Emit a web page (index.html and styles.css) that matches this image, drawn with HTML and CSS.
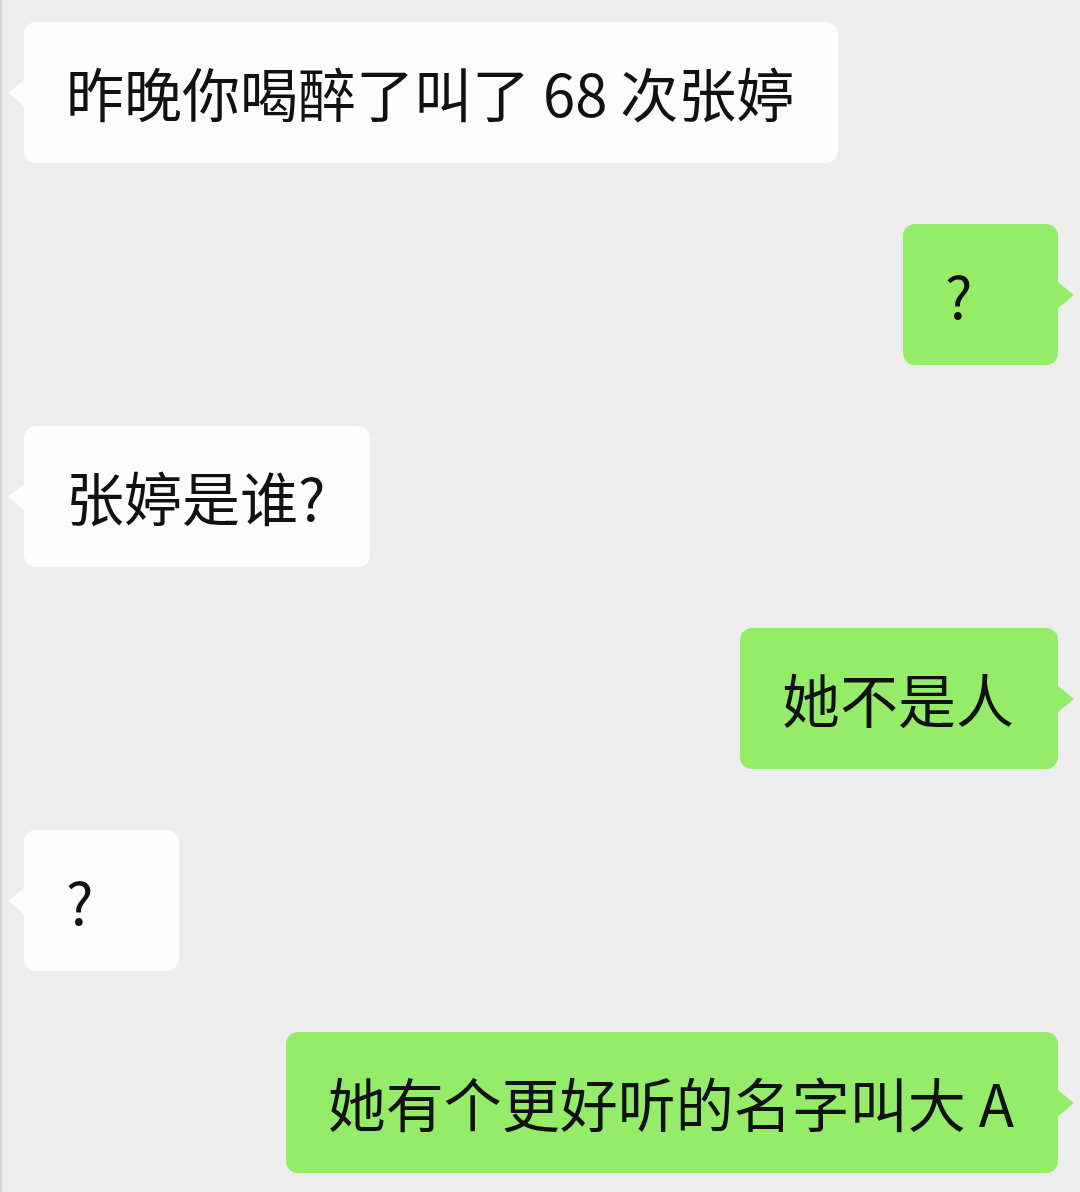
FILE: index.html
```html
<!DOCTYPE html>
<html lang="zh-CN">
<head>
    <meta charset="UTF-8">
    <meta name="viewport" content="width=device-width, initial-scale=1.0">
    <title>聊天记录</title>
    <link rel="stylesheet" href="styles.css">
</head>
<body>

    <!-- Chatverlauf -->
    <div class="chat">
        <div class="row left">
            <div class="bubble">昨晚你喝醉了叫了 68 次张婷</div>
        </div>
        <div class="row right">
            <div class="bubble">?</div>
        </div>
        <div class="row left">
            <div class="bubble">张婷是谁?</div>
        </div>
        <div class="row right">
            <div class="bubble">她不是人</div>
        </div>
        <div class="row left">
            <div class="bubble">?</div>
        </div>
        <div class="row right">
            <div class="bubble">她有个更好听的名字叫大 A</div>
        </div>
    </div>

</body>
</html>
```

FILE: styles.css
```css
/* Grauer Hintergrund wie im Chatfenster */
body {
    margin: 0;
    background-color: #ededed;
    font-family: "Noto Sans CJK SC", "Noto Sans", sans-serif;
    color: #111;
}

.chat {
    display: flex;
    flex-direction: column;
    gap: 61px;
    padding: 22px 0 17px 0;
    border-left: 2px solid #d6d6d6;
    min-height: 1192px;
    box-sizing: border-box;
}

.row {
    display: flex;
}

.row.left {
    justify-content: flex-start;
    padding-left: 22px;
}

.row.right {
    justify-content: flex-end;
    padding-right: 22px;
}

/* Sprechblase */
.bubble {
    position: relative;
    min-width: 69px;
    padding: 40px 44px 40px 42px;
    font-size: 58px;
    line-height: 61px;
    border-radius: 12px;
    white-space: nowrap;
}

.left .bubble {
    background-color: #fdfdfd;
}

.right .bubble {
    background-color: #95ec69;
}

/* kleine Spitze an der Blase */
.bubble::before {
    content: "";
    position: absolute;
    top: 50%;
    margin-top: -13px;
    border-top: 13px solid transparent;
    border-bottom: 13px solid transparent;
}

.left .bubble::before {
    left: -16px;
    border-right: 16px solid #fdfdfd;
}

.right .bubble::before {
    right: -16px;
    border-left: 16px solid #95ec69;
}
```
